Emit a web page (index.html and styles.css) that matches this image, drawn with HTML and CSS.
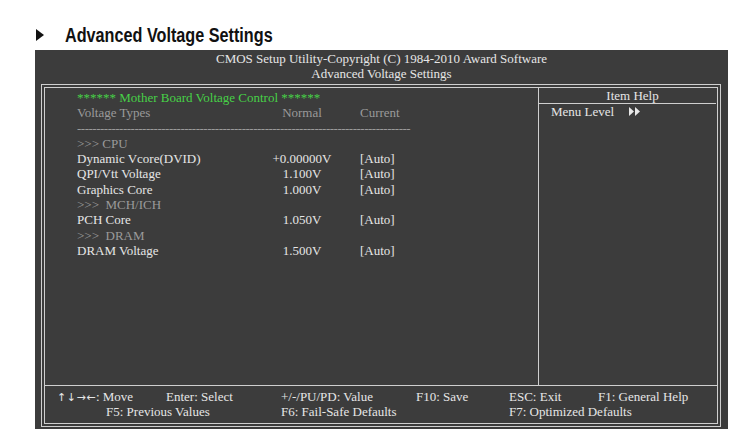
FILE: index.html
```html
<!DOCTYPE html>
<html>
<head>
<meta charset="utf-8">
<link rel="stylesheet" href="styles.css">
</head>
<body>
<div class="title">
  <svg class="title-arrow" width="8" height="12" viewBox="0 0 8 12"><polygon points="0,0 8,6 0,12" fill="#111"/></svg>
  <span class="title-text">Advanced Voltage Settings</span>
</div>
<div class="panel">
  <div class="panel-head">
    <div>CMOS Setup Utility-Copyright (C) 1984-2010 Award Software</div>
    <div>Advanced Voltage Settings</div>
  </div>
  <div class="frame">
    <div class="inner">
      <div class="body">
        <div class="main">
          <div class="row span green">****** Mother Board Voltage Control ******</div>
          <div class="row gray"><span>Voltage Types</span><span class="norm">Normal</span><span class="cur">Current</span></div>
          <div class="row span gray dashes">---------------------------------------------------------------------------------------</div>
          <div class="row span gray">&gt;&gt;&gt; CPU</div>
          <div class="row"><span>Dynamic Vcore(DVID)</span><span class="norm">+0.00000V</span><span class="cur">[Auto]</span></div>
          <div class="row"><span>QPI/Vtt Voltage</span><span class="norm">1.100V</span><span class="cur">[Auto]</span></div>
          <div class="row"><span>Graphics Core</span><span class="norm">1.000V</span><span class="cur">[Auto]</span></div>
          <div class="row span gray">&gt;&gt;&gt;&nbsp; MCH/ICH</div>
          <div class="row"><span>PCH Core</span><span class="norm">1.050V</span><span class="cur">[Auto]</span></div>
          <div class="row span gray">&gt;&gt;&gt;&nbsp; DRAM</div>
          <div class="row"><span>DRAM Voltage</span><span class="norm">1.500V</span><span class="cur">[Auto]</span></div>
        </div>
        <div class="help">
          <div class="help-head">Item Help</div>
          <div class="help-line"><span>Menu Level</span>
            <svg class="dbl" width="12" height="9" viewBox="0 0 12 9"><polygon points="0,0 5,4.5 0,9" fill="#e8e8e8"/><polygon points="6,0 11,4.5 6,9" fill="#e8e8e8"/></svg>
          </div>
        </div>
      </div>
      <div class="footer">
        <span class="f1"><span class="arr">↑↓→←</span>: Move</span>
        <span class="f2">Enter: Select</span>
        <span class="f3">+/-/PU/PD: Value</span>
        <span class="f4">F10: Save</span>
        <span class="f5">ESC: Exit</span>
        <span class="f6">F1: General Help</span>
        <span class="g1">F5: Previous Values</span>
        <span class="g3">F6: Fail-Safe Defaults</span>
        <span class="g5">F7: Optimized Defaults</span>
      </div>
    </div>
  </div>
</div>
</body>
</html>
```
FILE: styles.css
```css
html, body {
  margin: 0;
  padding: 0;
  background: #ffffff;
}
body {
  font-family: "Liberation Serif", "Times New Roman", serif;
}
.title {
  display: flex;
  align-items: center;
  height: 22px;
  padding-top: 24px;
  padding-left: 36px;
  margin-bottom: 4px;
}
.title-arrow {
  display: block;
  margin-right: 21px;
}
.title-text {
  display: inline-block;
  font-family: "Liberation Sans", Arial, sans-serif;
  font-weight: bold;
  font-size: 20px;
  color: #111;
  transform: scaleX(0.81);
  transform-origin: left center;
}
.panel {
  margin-left: 35px;
  width: 693px;
  height: 379px;
  background: #3c3c3c;
  color: #e6e6e6;
  font-size: 13px;
  box-sizing: border-box;
  padding-top: 1px;
}
.panel-head {
  text-align: center;
  line-height: 15px;
  height: 33px;
}
.frame {
  margin-left: 6px;
  width: 680px;
  height: 343px;
  box-sizing: border-box;
  border: 1px solid #cfcfcf;
  padding: 2px;
}
.inner {
  height: 100%;
  box-sizing: border-box;
  border: 1px solid #cfcfcf;
  display: flex;
  flex-direction: column;
}
.body {
  display: flex;
  height: 297px;
}
.main {
  width: 493px;
  box-sizing: border-box;
  padding: 2px 0 0 32px;
  line-height: 15.3px;
}
.row {
  display: grid;
  grid-template-columns: 194px 62px auto;
  white-space: nowrap;
}
.row.span {
  display: block;
}
.norm {
  text-align: center;
}
.cur {
  padding-left: 27px;
}
.green {
  color: #47d147;
}
.gray {
  color: #9a9a9a;
}
.dashes {
  letter-spacing: -0.5px;
}
.help {
  flex: 1;
  border-left: 1px solid #cfcfcf;
}
.help-head {
  text-align: center;
  line-height: 15px;
  border-bottom: 1px solid #cfcfcf;
  padding-left: 10px;
  margin-right: 1px;
}
.help-line {
  display: flex;
  align-items: center;
  padding-left: 12px;
  line-height: 15px;
}
.dbl {
  margin-left: 15px;
}
.footer {
  flex: 1;
  border-top: 1px solid #cfcfcf;
  display: grid;
  grid-template-columns: 12px 109px 115px 135px 93px 89px 1fr;
  grid-template-rows: 14.5px 14.5px;
  padding-top: 4px;
  line-height: 14.5px;
  white-space: nowrap;
}
.arr {
  font-family: "DejaVu Sans", sans-serif;
  font-size: 11px;
  letter-spacing: 0.5px;
}
.f1 { grid-column: 2; grid-row: 1; }
.f2 { grid-column: 3; grid-row: 1; }
.f3 { grid-column: 4; grid-row: 1; }
.f4 { grid-column: 5; grid-row: 1; }
.f5 { grid-column: 6; grid-row: 1; }
.f6 { grid-column: 7; grid-row: 1; }
.g1 { grid-column: 2 / 4; grid-row: 2; padding-left: 49px; }
.g3 { grid-column: 4 / 6; grid-row: 2; }
.g5 { grid-column: 6 / 8; grid-row: 2; }
```
